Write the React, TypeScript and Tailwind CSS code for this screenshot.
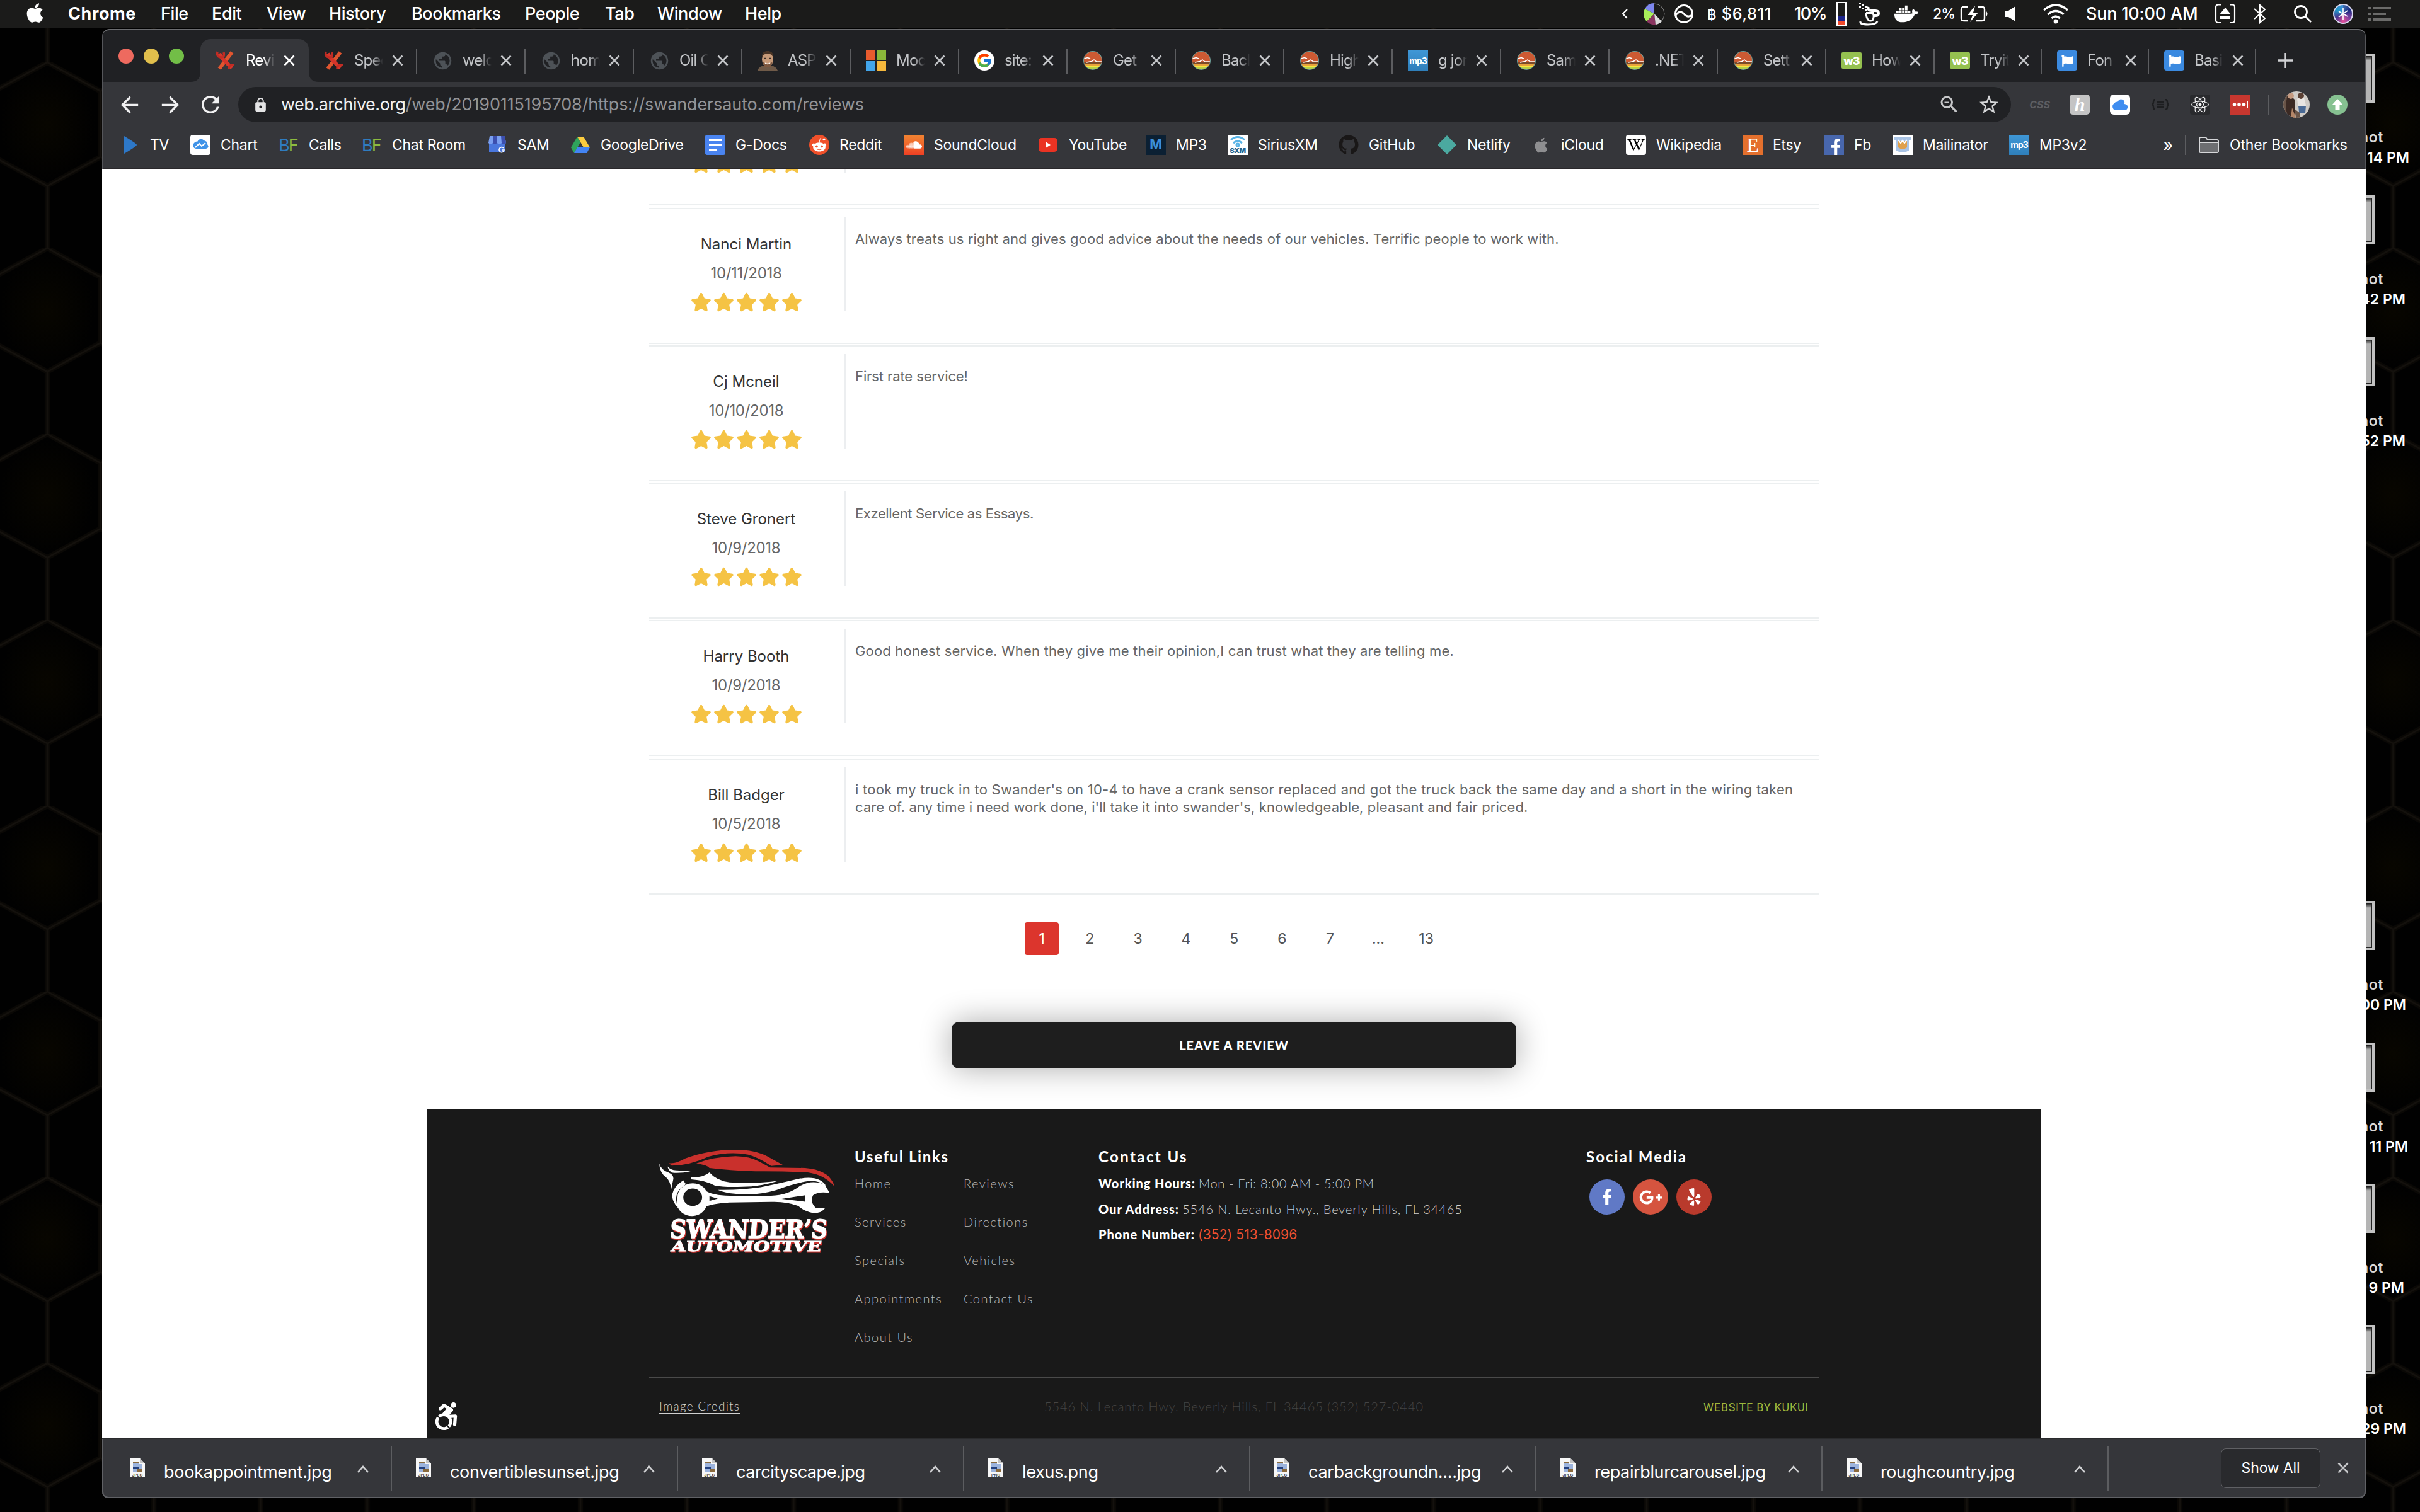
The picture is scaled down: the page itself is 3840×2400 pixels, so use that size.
import type { ReactNode } from 'react';
import {
  FaApple, FaRedditAlien, FaSoundcloud, FaGithub, FaWikipediaW, FaFacebookF, FaYelp,
  FaDocker, FaReact, FaGooglePlusG, FaAccessibleIcon, FaStar, FaFlag, FaJava,
} from 'react-icons/fa';
import { FcGoogle } from 'react-icons/fc';
import { MdLock, MdPublic, MdArrowBack, MdArrowForward, MdRefresh, MdStarBorder, MdZoomOut } from 'react-icons/md';

/* ---------- desktop ---------- */

function Wallpaper() {
  return (
    <svg className="absolute inset-0" width="3840" height="2400">
      <defs>
        <radialGradient id="cell">
          <stop offset="0" stopColor="#080600" />
          <stop offset="1" stopColor="#010101" />
        </radialGradient>
        <pattern id="comb" width="169.2" height="295" patternUnits="userSpaceOnUse" x="-9.6" y="99">
          <rect width="169.2" height="295" fill="#010101" />
          <ellipse cx="84.6" cy="98" rx="76" ry="90" fill="url(#cell)" />
          <path d="M84.6 0L169.2 46V150L84.6 196L0 150V46ZM84.6 196V295" fill="none" stroke="#0a0805" strokeWidth="8" />
          <path d="M84.6 0L169.2 46V150L84.6 196L0 150V46ZM84.6 196V295" fill="none" stroke="#14110d" strokeWidth="2.5" />
        </pattern>
      </defs>
      <rect width="3840" height="2400" fill="url(#comb)" />
    </svg>
  );
}

const shots = [
  { top: 'top-[85px]', time: '14 PM', w: 'w-[69px]' },
  { top: 'top-[310px]', time: '42 PM', w: 'w-[63px]' },
  { top: 'top-[535px]', time: '52 PM', w: 'w-[63px]' },
  { top: 'top-[1430px]', time: '00 PM', w: 'w-[64px]' },
  { top: 'top-[1655px]', time: '11 PM', w: 'w-[67px]' },
  { top: 'top-[1879px]', time: '9 PM', w: 'w-[61px]' },
  { top: 'top-[2103px]', time: '29 PM', w: 'w-[64px]' },
];

function DesktopFile({ top, time, w }: { top: string; time: string; w: string }) {
  return (
    <div className={`absolute left-[3754px] ${top} text-[23px] leading-[32px] font-semibold text-white`}>
      <div className="h-[78px] w-[15px] border-y-[4px] border-r-[5px] border-[#c2c2c2] bg-gradient-to-b from-[#222] via-[#b4b4b4] via-10% to-[#b4b4b4]">
        <div className="h-full w-full border-y border-r-2 border-[#222]" />
      </div>
      <div className="mt-[39px] flex w-[28px] justify-end overflow-hidden tracking-[0.6px] text-[#d8d8d8]">hot</div>
      <div className={`flex ${w} justify-end overflow-hidden whitespace-nowrap`}>{time}</div>
    </div>
  );
}

/* ---------- macOS menu bar ---------- */

const menus = [
  ['File', 'w-[81px]'], ['Edit', 'w-[87px]'], ['View', 'w-[99px]'], ['History', 'w-[131px]'],
  ['Bookmarks', 'w-[180px]'], ['People', 'w-[127px]'], ['Tab', 'w-[83px]'], ['Window', 'w-[139px]'], ['Help', 'w-[70px]'],
];

function MenuBar() {
  return (
    <div className="relative flex h-[44px] items-center bg-[#1b1b1a] text-[27px] leading-[44px] font-medium tracking-[-0.4px] whitespace-nowrap text-white">
      <div className="w-[108px] pl-[38px]"><FaApple size={35} className="-mt-[3px]" /></div>
      <div className="w-[147px] font-bold tracking-[0.6px]">Chrome</div>
      {menus.map(([m, w]) => <div key={m} className={w}>{m}</div>)}
      <div className="ml-auto flex w-[1274px] items-center">
        <div className="w-[42px] pl-[7px]">
          <svg width="11" height="20" fill="none" stroke="#fff" strokeWidth="2.2"><path d="M9 3L2 10L9 17" /></svg>
        </div>
        <div className="w-[48px]">
          <svg width="34" height="34" viewBox="-17 -17 34 34">
            <circle r="16" fill="#1b1b1a" stroke="#999" strokeWidth="1" />
            <path d="M0 0V-17A17 17 0 0 0 -15 -8Z" fill="#7d87ee" />
            <path d="M0 0L-15 -8A17 17 0 0 0 -12 12Z" fill="#a8ee5a" />
            <path d="M0 0L-12 12A17 17 0 0 0 2 17Z" fill="#8a3560" />
            <path d="M0 0L2 17A17 17 0 0 0 12 12Z" fill="#ddd" />
          </svg>
        </div>
        <div className="w-[53px]">
          <svg width="32" height="32" viewBox="-16 -16 32 32" fill="none" stroke="#fff" strokeWidth="3">
            <circle r="13.5" /><path d="M-13 2Q-6 -7 0 0T13 2" />
          </svg>
        </div>
        <div className="w-[138px] text-[25px] tracking-[0.8px]"><span className="text-[22px]">฿</span> $6,811</div>
        <div className="w-[67px] tracking-[-1.4px]">10%</div>
        <div className="flex h-[38px] w-[16px] flex-col justify-end border-2 border-white">
          <div className="h-[7px] bg-[#1c2489]" /><div className="h-[6px] bg-[#f04a2c]" />
        </div>
        <div className="relative ml-[18px] w-[58px]">
          <svg width="38" height="38" viewBox="0 0 38 38" fill="none" stroke="#fff">
            <path d="M2 1H5V4H2ZM6 4H9V7H6ZM2 7H5V10H2ZM7 9H10V12H7ZM11 6H14V9H11ZM11 11H14V14H11Z" fill="#fff" stroke="none" />
            <path d="M17 8Q15 14 22 14H28Q33 14 33 18T28 22H24" strokeWidth="4" />
            <path d="M13 18Q14 30 20 30T25 20M4 31Q3 36 16 36T31 31" strokeWidth="3" />
            <path d="M13 16H26V22Q22 19 13 19Z" fill="#fff" stroke="none" />
          </svg>
        </div>
        <div className="w-[61px]"><FaDocker size={38} /></div>
        <div className="w-[43px] text-[23px] tracking-[-1px]">2%</div>
        <div className="w-[71px]">
          <svg width="46" height="26" fill="none" stroke="#fff" strokeWidth="2.4">
            <path d="M13 2H6Q2 2 2 6V20Q2 24 6 24H12M28 2H35Q39 2 39 6V20Q39 24 35 24H26" />
            <path d="M42 9Q45 13 42 17Z" fill="#fff" stroke="none" />
            <path d="M24 0L12 15H20L16 26L29 11H21Z" fill="#fff" stroke="none" />
          </svg>
        </div>
        <div className="w-[60px]">
          <svg width="18" height="26" fill="#fff"><path d="M0 8H6L17 1V25L6 18H0Z" /></svg>
        </div>
        <div className="w-[69px]">
          <svg width="42" height="32" viewBox="0 0 42 32" fill="none" stroke="#fff" strokeWidth="3.2">
            <path d="M2 10Q21 -6 40 10M8.500 17Q21 6 33.500 17M14.500 23Q21 17 27.500 23" />
            <circle cx="21" cy="28" r="3.400" fill="#fff" stroke="none" />
          </svg>
        </div>
        <div className="w-[204px] tracking-[-0.2px]">Sun 10:00 AM</div>
        <div className="w-[62px]">
          <svg width="34" height="32" fill="none" stroke="#fff" strokeWidth="2.2">
            <path d="M10 1.500H6Q2 1.500 2 5.500V26Q2 30 6 30H10M24 1.500H28Q32 1.500 32 5.500V26Q32 30 28 30H24" />
            <path d="M17 6L26 17H8ZM9 20H25V24H9Z" fill="#fff" stroke="none" />
          </svg>
        </div>
        <div className="w-[63px]">
          <svg width="20" height="32" fill="none" stroke="#fff" strokeWidth="2"><path d="M1 8L18 23L10 30V2L18 9L1 24" /></svg>
        </div>
        <div className="w-[63px]">
          <svg width="30" height="30" fill="none" stroke="#fff" strokeWidth="2.800"><circle cx="12" cy="12" r="9.500" /><path d="M19 19L28 28" /></svg>
        </div>
        <div className="w-[55px]">
          <div className="flex size-[32px] items-center justify-center rounded-full border-2 border-[#d9d9ee] bg-[conic-gradient(#3f6fb0,#1a2a80,#7a3fa0,#e0509a,#4a3690,#1f96c6,#3f8fd9)]">
            <svg width="20" height="20" stroke="#fff" strokeWidth="1.600"><path d="M10 1V19M3 6L17 14M17 5L3 15" /></svg>
          </div>
        </div>
        <svg width="38" height="22" fill="#6b6b6a">
          <path d="M0 0H5V4H0ZM9 0H37V4H9ZM0 9H5V13H0ZM9 9H29V13H9ZM0 18H5V22H0ZM9 18H37V22H9Z" />
        </svg>
      </div>
    </div>
  );
}

/* ---------- favicons ---------- */

const Tools = () => (
  <svg width="32" height="32" viewBox="0 0 32 32" fill="none">
    <path d="M26 3L6 29" stroke="#e0552f" strokeWidth="6" />
    <path d="M6 5L11 13L26 28" stroke="#d5352a" strokeWidth="6" />
    <path d="M3 2Q1 10 8 11T13 3M21 29Q21 22 30 23" stroke="#c22c24" strokeWidth="3.500" />
  </svg>
);
const Globe = () => <MdPublic size={33} className="text-[#4d5257]" />;
const Sunset = () => (
  <svg width="32" height="32" viewBox="0 0 32 32">
    <defs><clipPath id="sunclip"><circle cx="16" cy="16" r="14" /></clipPath></defs>
    <circle cx="16" cy="16" r="15" fill="#6fa09a" />
    <g clipPath="url(#sunclip)">
      <path d="M0 0H32V21H0Z" fill="#cc5a33" /><path d="M0 19H32V22H0Z" fill="#7a4a2a" />
      <path d="M0 22H32V24H0Z" fill="#e8a33c" /><path d="M0 24H32V27H0Z" fill="#f6e83c" /><path d="M0 27H32V32H0Z" fill="#b5cf4a" />
      <path d="M2 13L8 11.500L12 13M6 19L14 17.500L18 15L22 18L30 18" stroke="#fff" strokeWidth="1.500" fill="none" />
    </g>
  </svg>
);
const Portrait = () => (
  <svg width="32" height="32" viewBox="0 0 32 32">
    <path d="M0 32Q3 24 12 24H22Q30 26 32 32Z" fill="#6f5a48" />
    <ellipse cx="16" cy="14" rx="9" ry="12.500" fill="#c79a78" /><path d="M7 12Q6 1 16 1T25 12Q23 5 16 5T7 12Z" fill="#4a3526" />
    <path d="M8 18Q16 25 24 18L21 26H11Z" fill="#7d5840" /><path d="M12 20Q16 23 20 20" stroke="#fff" fill="none" strokeWidth="1.500" />
    <path d="M10 12.500H14M18 12.500H22" stroke="#3a2a20" strokeWidth="1.500" />
  </svg>
);
const Windows = () => (
  <svg width="32" height="32"><path d="M0 0H15V15H0Z" fill="#e85b2e" /><path d="M17 0H32V15H17Z" fill="#8ab83a" /><path d="M0 17H15V32H0Z" fill="#42a5ea" /><path d="M17 17H32V32H17Z" fill="#f5b83c" /></svg>
);
const GoogleG = () => <div className="flex size-[32px] items-center justify-center rounded-full bg-white"><FcGoogle size={26} /></div>;
const Mp3 = () => <div className="flex size-[32px] items-center justify-center bg-gradient-to-b from-[#3f97d6] to-[#2f7fba] text-[14px] font-bold tracking-[-1px] text-white">mp3</div>;
const W3 = () => <div className="flex h-[26px] w-[32px] items-center justify-center rounded-[2px] bg-[#95c150] text-[18px] font-extrabold tracking-[-1px] text-white">w3</div>;
const BlueFlag = () => <div className="flex size-[32px] items-center justify-center rounded-[4px] bg-[#3b8ae0] text-white"><FaFlag size={19} /></div>;

const Cross = ({ className }: { className: string }) => (
  <svg width="18" height="18" fill="none" stroke="currentColor" strokeWidth="2.600" className={className}><path d="M1.500 1.500L16.500 16.500M16.500 1.500L1.500 16.500" /></svg>
);

/* ---------- tab strip ---------- */

const tabs: [string, () => ReactNode][] = [
  ['Revi', Tools], ['Spec', Tools], ['welc', Globe], ['hom', Globe], ['Oil C', Globe], ['ASP', Portrait], ['Mod', Windows],
  ['site:', GoogleG], ['Get', Sunset], ['Bacl', Sunset], ['High', Sunset], ['g jor', Mp3], ['Sam', Sunset], ['.NET', Sunset],
  ['Sett', Sunset], ['How', W3], ['Tryit', W3], ['Fon', BlueFlag], ['Basi', BlueFlag],
];

function TabStrip() {
  return (
    <div className="flex h-[82px] bg-[#202124] pt-[14px]">
      <div className="flex w-[156px] items-center gap-[16px] pb-[14px] pl-[26px]">
        <div className="size-[24px] rounded-full bg-[#ee6a5f]" />
        <div className="size-[24px] rounded-full bg-[#e1bf4c]" />
        <div className="size-[24px] rounded-full bg-[#72be47]" />
      </div>
      {tabs.map(([title, Icon], i) => (
        <div
          key={i}
          className={`relative flex h-[68px] items-center pl-[24px] ${i > 15 ? 'w-[170px]' : 'w-[172px]'} ${i === 0 ? 'rounded-t-[16px] bg-[#35363a] text-white' : 'text-[#c3c5c8]'}`}
        >
          {i === 0 && (
            <>
              <svg className="absolute bottom-0 -left-[16px]" width="16" height="16"><path d="M16 0V16H0Q16 16 16 0Z" fill="#35363a" /></svg>
              <svg className="absolute -right-[16px] bottom-0" width="16" height="16"><path d="M0 0V16H16Q0 16 0 0Z" fill="#35363a" /></svg>
            </>
          )}
          <div className="flex w-[48px] items-center"><Icon /></div>
          <div className="w-[46px] overflow-hidden text-[24px] leading-[40px] tracking-[-0.8px] whitespace-nowrap [mask-image:linear-gradient(to_right,black_60%,transparent)]">{title}</div>
          <Cross className="ml-[14px]" />
          {i > 0 && <div className="absolute top-[15px] right-0 h-[40px] w-[2px] bg-[#5c5d60]" />}
        </div>
      ))}
      <svg className="mt-[22px] ml-[34px]" width="24" height="24" stroke="#d0d1d3" strokeWidth="3.400"><path d="M12 0V24M0 12H24" /></svg>
    </div>
  );
}

/* ---------- toolbar ---------- */

function Toolbar() {
  return (
    <div className="flex h-[72px] items-center text-[#f1f1f2]">
      <div className="w-[64px] pl-[23px]"><MdArrowBack size={41} /></div>
      <div className="w-[64px] pl-[24px]"><MdArrowForward size={41} /></div>
      <div className="w-[88px] pl-[23px]"><MdRefresh size={42} /></div>
      <div className="flex h-[56px] w-[2813px] items-center rounded-full bg-[#202124] text-[27px] leading-[56px] whitespace-nowrap">
        <div className="w-[68px] pl-[23px] text-[#e4e4e5]"><MdLock size={25} /></div>
        <span className="tracking-[-0.5px]">web.archive.org</span>
        <span className="tracking-[-0.14px] text-[#929396]">/web/20190115195708/https://swandersauto.com/reviews</span>
        <MdZoomOut size={36} className="ml-auto text-[#c6c7c9]" />
        <MdStarBorder size={36} className="mr-[17px] ml-[27px] text-[#d6d7d9]" />
      </div>
      <div className="flex w-[93px] justify-end pr-[31px] text-[16px] font-bold text-[#5d5e62] italic">CSS</div>
      <div className="flex size-[32px] items-center justify-center rounded-[5px] bg-[#c4c4c4] font-['Liberation_Serif'] text-[30px] leading-none font-bold text-white italic">h</div>
      <div className="ml-[32px] flex size-[32px] items-center justify-center rounded-[6px] bg-white">
        <svg width="26" height="20"><path d="M6 19A6 6 0 0 1 4 8Q6 5 9 6Q12 0 17 2Q21 4 20 9Q26 10 25 15Q24 19 20 19Z" fill="#3f8df0" /></svg>
      </div>
      <svg className="ml-[34px]" width="28" height="18" fill="none" stroke="#1d1e20" strokeWidth="2.400"><path d="M6 1Q3 1 3 5T0 9Q3 9 3 13T6 17M22 1Q25 1 25 5T28 9Q25 9 25 13T22 17M8 5H20M8 9H20M8 13H20" /></svg>
      <div className="ml-[33px] flex size-[32px] items-center justify-center rounded-[4px] bg-[#292a2d]"><FaReact size={28} /></div>
      <div className="ml-[31px] flex size-[33px] items-center justify-center rounded-[4px] bg-[#c8372f]">
        <svg width="26" height="12" fill="#fff"><circle cx="3.500" cy="6" r="2.800" /><circle cx="11" cy="6" r="2.800" /><circle cx="18.500" cy="6" r="2.800" /><path d="M23 0H25V12H23Z" /></svg>
      </div>
      <div className="ml-[28px] h-[32px] w-[2px] bg-[#5c5d60]" />
      <svg className="ml-[22px]" width="42" height="42" viewBox="0 0 42 42">
        <defs><clipPath id="ava"><circle cx="21" cy="21" r="21" /></clipPath></defs>
        <g clipPath="url(#ava)">
          <rect width="42" height="42" fill="#cfcbc6" /><path d="M3 10L10 5L19 14L18 42H6Z" fill="#3b2a24" /><path d="M22 12L32 6L36 22L34 34H25Z" fill="#e8e5e2" />
          <path d="M24 23H36L35 34H25Z" fill="#4a6a95" /><circle cx="12" cy="7" r="5" fill="#c49a80" /><circle cx="28" cy="7" r="5" fill="#5a4034" /><path d="M14 26L20 42H12Z" fill="#b38668" />
          <path d="M0 0H8L4 20L6 42H0ZM18 28L26 34V42H20Z" fill="#6a5548" />
        </g>
      </svg>
      <div className="ml-[28px] flex size-[32px] items-center justify-center rounded-full bg-[#86c191]">
        <svg width="16" height="18" fill="#fff"><path d="M8 0L16 9H11.500V18H4.500V9H0Z" /></svg>
      </div>
    </div>
  );
}

/* ---------- bookmarks bar ---------- */

const BF = () => <span className="text-[27px] leading-none font-normal tracking-[-2px]"><span className="text-[#2f7cc0]">B</span><span className="text-[#8dbb3f]">F</span></span>;

const bookmarks: [string, string, ReactNode][] = [
  ['TV', 'w-[112px]', <svg width="32" height="28"><path d="M7 0Q27 12 27 14T7 28Z" fill="#2d78c8" /></svg>],
  ['Chart', 'w-[140px]', <div className="flex size-[32px] items-center justify-center rounded-[4px] bg-white"><svg width="27" height="20"><path d="M6 16A5.500 5.500 0 0 1 4 6Q6 4 8 5Q13 -3 19 3Q25 5 24 9Q28 14 22 16Z" fill="#3f93e8" /><path d="M5 14L11 8L15 12L21 7" stroke="#fff" strokeWidth="2" fill="none" /></svg></div>],
  ['Calls', 'w-[132px]', <BF />],
  ['Chat Room', 'w-[199px]', <BF />],
  ['SAM', 'w-[132px]', <svg width="32" height="28"><path d="M3 9H29V26H3Z" fill="#4a77dd" /><path d="M4 0H28L30 11Q26 14 23 11Q19 14 16 11Q13 14 9 11Q5 14 2 11Z" fill="#7a9ff0" /><path d="M10 0H16V11Q12 14 9 11ZM22 0H28L30 11Q26 14 23 11Z" fill="#3c4fae" /><path d="M26 19A4 4 0 1 0 27 22H23" stroke="#fff" strokeWidth="1.600" fill="none" /></svg>],
  ['GoogleDrive', 'w-[214px]', <svg width="32" height="28"><path d="M11 1L1 18L6 27L16 10Z" fill="#2fa45c" /><path d="M11 1H21L31 18H21Z" fill="#fbcc3f" /><path d="M11 18H31L26 27H6Z" fill="#4384f3" /></svg>],
  ['G-Docs', 'w-[165px]', <svg width="32" height="32"><rect width="32" height="32" rx="3" fill="#4a84f0" /><path d="M6 6H26V10H6ZM6 14H26V18H6ZM6 22H18V26H6Z" fill="#fff" /></svg>],
  ['Reddit', 'w-[150px]', <div className="flex size-[32px] items-center justify-center rounded-full bg-[#f0502a] text-white"><FaRedditAlien size={24} /></div>],
  ['SoundCloud', 'w-[214px]', <div className="flex size-[32px] items-center justify-center bg-gradient-to-b from-[#f08432] to-[#ee3f24] text-white"><FaSoundcloud size={26} /></div>],
  ['YouTube', 'w-[170px]', <div className="flex h-[22px] w-[30px] items-center justify-center rounded-[5px] bg-[#ea3323]"><svg width="8" height="10" fill="#fff"><path d="M0 0L8 5L0 10Z" /></svg></div>],
  ['MP3', 'w-[130px]', <div className="flex size-[32px] items-center justify-center bg-[#0b2033] text-[21px] font-bold text-[#3c8fd8]">M</div>],
  ['SiriusXM', 'w-[176px]', <div className="flex size-[32px] flex-col items-center justify-center bg-white text-[11px] leading-[10px] font-black tracking-[-0.5px] text-[#24618e]"><svg width="26" height="18" fill="none" stroke="#5ab4e6" strokeWidth="3"><path d="M2 6Q13 -3 24 6M6 11Q13 5 20 11" /><circle cx="13" cy="14" r="2" /></svg>SXM</div>],
  ['GitHub', 'w-[156px]', <FaGithub size={32} className="text-[#191717]" />],
  ['Netlify', 'w-[149px]', <svg width="32" height="32"><path d="M16 1L31 16L16 31L1 16Z" fill="#4ba9a0" /></svg>],
  ['iCloud', 'w-[151px]', <FaApple size={27} className="ml-[3px] text-[#8e8e90]" />],
  ['Wikipedia', 'w-[185px]', <div className="flex size-[32px] items-center justify-center rounded-[4px] bg-white text-black"><FaWikipediaW size={28} /></div>],
  ['Etsy', 'w-[129px]', <div className="flex size-[32px] items-center justify-center bg-[#e4702d] font-['Liberation_Serif'] text-[32px] leading-none text-white">E</div>],
  ['Fb', 'w-[109px]', <div className="flex size-[32px] items-end justify-end bg-[#4867ad] text-white"><FaFacebookF size={26} /></div>],
  ['Mailinator', 'w-[185px]', <div className="flex size-[32px] items-center justify-center bg-white"><svg width="30" height="26"><path d="M2 1H28V6H25V22Q15 28 5 22V6H2Z" fill="#a9c4e6" /><path d="M8 7H22V17Q15 22 8 17Z" fill="#e0a04a" /><path d="M8 5L12 10L15 6L18 10L22 5" stroke="#fff" strokeWidth="2" fill="none" /></svg></div>],
  ['MP3v2', 'w-[244px]', <Mp3 />],
];

function BookmarksBar() {
  return (
    <div className="flex h-[64px] items-center pb-[8px] pl-[28px] text-[23px] leading-[40px] tracking-[-0.3px] whitespace-nowrap text-white">
      {bookmarks.map(([label, w, icon]) => (
        <div key={label} className={`flex shrink-0 items-center ${w}`}>
          <div className="flex w-[48px] shrink-0 items-center">{icon}</div>
          {label}
        </div>
      ))}
      <div className="w-[35px] shrink-0 text-[28px]">»</div>
      <div className="mr-[19px] h-[32px] w-[2px] bg-[#5c5d60]" />
      <svg className="ml-[1px]" width="32" height="26" fill="none" stroke="#d6d7d9" strokeWidth="2"><path d="M1 3Q1 1 3 1H11L14 5H29Q31 5 31 7V23Q31 25 29 25H3Q1 25 1 23ZM1 9H31" /><path d="M2 10H30V24H2Z" fill="#6d6e71" stroke="none" /></svg>
      <div className="ml-[17px] tracking-[-0.17px]">Other Bookmarks</div>
    </div>
  );
}

/* ---------- page ---------- */

type ReviewData = { name: string; date: string; lines: [string, string][]; gap: string };
const reviews: ReviewData[] = [
  { name: '', date: '', lines: [], gap: 'mt-0' },
  { name: 'Nanci Martin', date: '10/11/2018', gap: 'mt-[4px]', lines: [['Always treats us right and gives good advice about the needs of our vehicles. Terrific people to work with.', 'tracking-[0.12px]']] },
  { name: 'Cj Mcneil', date: '10/10/2018', gap: 'mt-[2px]', lines: [['First rate service!', 'tracking-[-0.1px]']] },
  { name: 'Steve Gronert', date: '10/9/2018', gap: 'mt-[2px]', lines: [['Exzellent Service as Essays.', 'tracking-[-0.38px]']] },
  { name: 'Harry Booth', date: '10/9/2018', gap: 'mt-[2px]', lines: [['Good honest service. When they give me their opinion,I can trust what they are telling me.', 'tracking-[0.18px]']] },
  {
    name: 'Bill Badger', date: '10/5/2018', gap: 'mt-[4px]',
    lines: [
      ["i took my truck in to Swander's on 10-4 to have a crank sensor replaced and got the truck back the same day and a short in the wiring taken", 'tracking-[0.26px]'],
      ["care of. any time i need work done, i'll take it into swander's, knowledgeable, pleasant and fair priced.", 'tracking-[0.1px]'],
    ],
  },
];

function Review({ name, date, lines, gap }: ReviewData) {
  return (
    <div className={`flex h-[216px] border-y-2 border-[#eceff0] ${gap}`}>
      <div className="flex w-[308px] flex-col items-center pt-[36px]">
        <div className="h-[40px] text-[24px] leading-[40px] text-[#333]">{name}</div>
        <div className="mt-[6px] h-[40px] text-[24px] leading-[40px] tracking-[-0.3px] text-[#666]">{date}</div>
        <div className="mt-[9px] flex gap-[3px] text-[#f5c344]">
          {[0, 1, 2, 3, 4].map((s) => <FaStar key={s} size={33} />)}
        </div>
      </div>
      <div className="mt-[12px] ml-[2px] h-[150px] border-l-2 border-[#eceef0] pt-[21px] pl-[15px] text-[22px] leading-[28px] whitespace-nowrap text-[#666]">
        {lines.map(([t, tr]) => <div key={t} className={tr}>{t}</div>)}
      </div>
    </div>
  );
}

function Logo() {
  return (
    <div className="relative h-[164px] w-[281px]">
      <svg width="279" height="162" viewBox="466 211 336 397" preserveAspectRatio="none" className="absolute">
        <path d="M484 263Q496 268 516 245Q560 211 612 211Q650 212 672 236L702 270L680 274Q655 240 636 230Q600 216 560 238Q525 272 490 273Z" fill="#c9302c" />
        <path d="M537 264Q570 238 612 236Q640 237 657 257L678 280L745 282Q775 287 790 315Q799 336 801 354Q782 308 750 299Q700 294 650 295Q600 292 562 282Q558 270 537 264Z" fill="#c9302c" />
        <g fill="#fff">
          <path d="M466 265Q470 290 484 300Q494 308 493 325L489 364Q487 332 480 320Q467 302 466 265Z" />
          <path d="M482 276Q488 292 500 291L526 295Q505 304 490 300Q483 290 482 276Z" />
          <path d="M527 318Q550 320 562 299Q575 330 600 338Q650 345 695 331Q660 355 625 355Q590 358 572 350Q555 330 527 326Z" />
          <path d="M578 367Q620 369 660 357Q700 340 730 325Q772 308 785 352Q768 325 745 335Q715 348 690 368Q650 392 610 382Q590 378 578 367Z" />
          <path d="M512 330Q475 380 503 440Q489 380 517 345Z" />
          <path fillRule="evenodd" d="M501 396A29 55 0 0 1 556 372Q568 388 600 390L680 390Q712 388 735 352Q757 326 782 346L792 380Q772 372 760 388Q753 415 766 438L783 438Q775 459 760 457Q742 450 732 430Q710 412 680 414L600 416Q568 420 556 432A29 55 0 0 1 501 396ZM512 396A18 34 0 1 0 548 396A18 34 0 1 0 512 396ZM562 392L578 401L562 410ZM745 388L700 402L745 413Z" />
        </g>
      </svg>
      <svg width="281" height="166" className="absolute overflow-visible font-['DejaVu_Serif'] font-bold drop-shadow-[1px_2px_0_#c9302c]">
        <g fill="#fff" stroke="#fff">
          <text x="0" y="0" transform="translate(16 140) skewX(-5)" fontSize="40" strokeWidth="1.600" textLength="250" lengthAdjust="spacingAndGlyphs">SWANDER’S</text>
          <text x="0" y="0" transform="translate(18 160.500) skewX(-10)" fontSize="22" strokeWidth="1" textLength="238" lengthAdjust="spacingAndGlyphs">AUTOMOTIVE</text>
        </g>
      </svg>
    </div>
  );
}

const links: [string, string][] = [
  ['Home', 'Reviews'], ['Services', 'Directions'], ['Specials', 'Vehicles'], ['Appointments', 'Contact Us'], ['About Us', ''],
];

function Footer() {
  const heading = 'h-[23px] text-[24px] leading-[22px] font-bold text-white';
  const row = 'h-[40.500px] leading-[40px]';
  return (
    <div className="relative ml-[516px] h-[522px] w-[2560px] bg-[#191919] pt-[65px] font-['Lato'] text-[20px] font-light whitespace-nowrap text-[#d0d0d0]">
      <div className="mx-auto h-[363px] w-[1856px] border-b-2 border-[#4a4a4a]">
        <div className="flex">
          <div className="w-[326px] pl-[16px]"><Logo /></div>
          <div className="w-[387px]">
            <div className={`${heading} tracking-[1.64px]`}>Useful Links</div>
            {links.map(([a, b]) => (
              <div key={a} className="flex h-[61px] items-center pb-[1px] tracking-[1.5px] text-[#b8b8b8]">
                <div className="w-[173px]">{a}</div>
                <div>{b}</div>
              </div>
            ))}
          </div>
          <div className="w-[774px]">
            <div className={`${heading} mb-[10px] tracking-[2.4px]`}>Contact Us</div>
            <div className={row}><b className="font-black tracking-[0.89px] text-white">Working Hours:</b><span className="ml-[5px] tracking-[0.7px]">Mon - Fri: 8:00 AM - 5:00 PM</span></div>
            <div className={row}><b className="font-black tracking-[0.98px] text-white">Our Address:</b><span className="ml-[5px] tracking-[0.9px]">5546 N. Lecanto Hwy., Beverly Hills, FL 34465</span></div>
            <div className={row}><b className="font-black tracking-[0.95px] text-white">Phone Number:</b><span className="ml-[5px] font-['Inter'] text-[21px] font-normal tracking-[0.1px] text-[#f05030]">(352) 513-8096</span></div>
          </div>
          <div>
            <div className={`${heading} tracking-[2.04px]`}>Social Media</div>
            <div className="mt-[24px] ml-[5px] flex gap-[13px] text-white">
              <div className="flex size-[56px] items-center justify-center rounded-full bg-[#6079c6]"><FaFacebookF size={26} /></div>
              <div className="flex size-[56px] items-center justify-center rounded-full bg-[#d5543f]"><FaGooglePlusG size={37} /></div>
              <div className="flex size-[56px] items-center justify-center rounded-full bg-[#b93a2c]"><FaYelp size={28} /></div>
            </div>
          </div>
        </div>
      </div>
      <div className="mx-auto flex h-[88px] w-[1856px] items-center justify-between px-[16px]">
        <div className="w-[200px] text-[19px] tracking-[1.24px] underline underline-offset-4">Image Credits</div>
        <div className="tracking-[0.98px] text-[#444]">5546 N. Lecanto Hwy. Beverly Hills, FL 34465 (352) 527-0440</div>
        <div className="flex w-[200px] justify-end pt-[2px] font-['Roboto'] text-[18px] font-normal tracking-[0.75px] text-[#9db63c]">WEBSITE BY KUKUI</div>
      </div>
      <FaAccessibleIcon size={44} className="absolute top-[466px] left-[8px] text-white" />
    </div>
  );
}

function Page() {
  return (
    <div className="h-[2014px] overflow-hidden bg-white">
      <div className="-mt-[158px] ml-[868px] w-[1856px]">
        {reviews.map((r) => <Review key={r.name} {...r} />)}
        <div className="mt-[44px] flex pl-[585px] text-[23px] text-[#555]">
          {['1', '2', '3', '4', '5', '6', '7', '...', '13'].map((p, i) => (
            <div key={p} className="flex w-[76.250px] justify-center">
              <div className={`flex h-[52px] w-[54px] items-center justify-center rounded-[4px] ${i === 0 ? 'bg-[#dc352d] text-white' : ''}`}>{p}</div>
            </div>
          ))}
        </div>
        <div className="mt-[106px] mb-[64px] ml-[480px] flex h-[74px] w-[896px] items-center justify-center rounded-[12px] bg-[#1e1e1e] font-['Lato'] text-[20px] font-black tracking-[1px] text-white shadow-[0_0_50px_rgba(0,0,0,0.33)]">LEAVE A REVIEW</div>
      </div>
      <Footer />
    </div>
  );
}

/* ---------- download shelf ---------- */

const files: [string, string, string][] = [
  ['bookappointment.jpg', 'JPEG', 'tracking-[-0.23px]'], ['convertiblesunset.jpg', 'JPEG', 'tracking-[-0.3px]'],
  ['carcityscape.jpg', 'JPEG', 'tracking-[-0.46px]'], ['lexus.png', 'PNG', 'tracking-[-0.3px]'],
  ['carbackgroundn....jpg', 'JPEG', 'tracking-[-0.3px]'], ['repairblurcarousel.jpg', 'JPEG', 'tracking-[-0.38px]'],
  ['roughcountry.jpg', 'JPEG', 'tracking-[-0.4px]'],
];

function Shelf() {
  return (
    <div className="flex h-[96px] items-center rounded-b-[10px] border-t-2 border-[#2a2b2d] bg-[#35363a] pl-[6px] text-[27px] leading-[40px] whitespace-nowrap text-white shadow-[inset_0_-2px_0_#606165,inset_2px_0_0_#606165,inset_-2px_0_0_#606165]">
      {files.map(([name, kind, tr]) => (
        <div key={name} className="relative flex h-[70px] w-[454px] items-center border-r-2 border-[#5c5d60] pl-[38px]">
          <svg className="-mt-[2px]" width="24" height="30" viewBox="0 0 24 30">
            <path d="M0 0H16L24 8V30H0Z" fill="#f7f7f7" /><path d="M16 0V8H24Z" fill="#c4c4c4" />
            <path d="M5 5H14V9H20V21H5Z" fill="#9db4dd" /><path d="M5 5H14V7H5ZM12 16H20V21H12Z" fill="#8a6a3c" /><path d="M5 14H14V17H5Z" fill="#23407f" />
            <text x="12" y="28.500" fontSize="6.500" fontWeight="700" textAnchor="middle" fill="#444">{kind}</text>
          </svg>
          <div className={`mt-[11px] ml-[30px] ${tr}`}>{name}</div>
          <svg className="absolute top-[30px] left-[398px]" width="20" height="12" fill="none" stroke="#d0d1d3" strokeWidth="2.600"><path d="M2 11L10 2L18 11" /></svg>
        </div>
      ))}
      <div className="mb-[2px] ml-[178px] flex h-[63px] w-[158px] items-center justify-center rounded-[8px] border border-[#5f6064] bg-[#292a2d] text-[23px] tracking-[-0.15px]">Show All</div>
      <Cross className="mb-[2px] ml-[27px] text-[#c6c7c9]" />
    </div>
  );
}

export default function App() {
  return (
    <div className="relative h-[2400px] w-[3840px] overflow-hidden bg-black font-['Inter',sans-serif]">
      <Wallpaper />
      <MenuBar />
      {shots.map((s) => <DesktopFile key={s.top} {...s} />)}
      <div className="absolute top-[46px] left-[162px] w-[3592px]">
        <div className="rounded-t-[12px] bg-[#35363a]">
          <div className="relative overflow-hidden rounded-t-[12px] border-t-2 border-[#6c6d70]">
            <TabStrip />
            <Toolbar />
            <BookmarksBar />
            <div className="h-[2px] bg-[#2a282b]" />
            <div className="pointer-events-none absolute inset-0 border-x-2 border-[#55565a]" />
          </div>
        </div>
        <Page />
        <Shelf />
      </div>
    </div>
  );
}
